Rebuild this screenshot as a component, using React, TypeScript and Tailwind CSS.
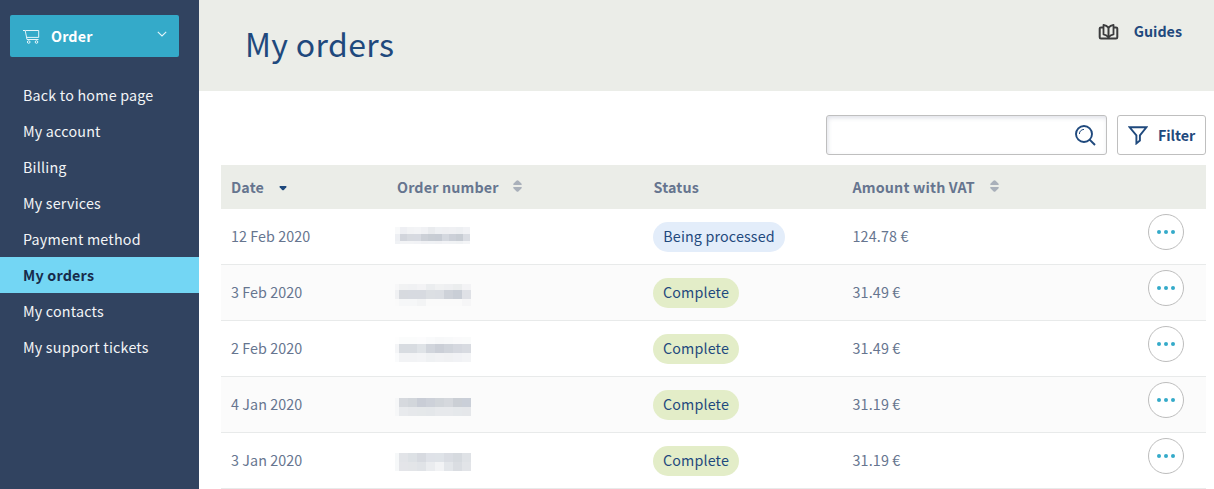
const menu = [
  "Back to home page",
  "My account",
  "Billing",
  "My services",
  "Payment method",
  "My orders",
  "My contacts",
  "My support tickets",
];

type Band = { height: number; colors: string[] };
type Mask = { top: number; edge: number; cell: number; bands: Band[] };
type Order = { date: string; status: string; amount: string; mask: Mask };

const orders: Order[] = [
  {
    date: "12 Feb 2020",
    status: "Being processed",
    amount: "124.78 €",
    mask: {
      top: 18,
      edge: 5,
      cell: 7,
      bands: [
        { height: 7, colors: ["#f8f9fa", "#eeeff3", "#f2f3f5", "#f3f4f6", "#f0f1f4", "#e9ebee", "#eef0f3", "#eeeff2", "#eff0f3", "#edeff2", "#f1f2f5"] },
        { height: 7, colors: ["#edeff3", "#d2d5dc", "#d7dae0", "#d7dae1", "#ccd0d7", "#c8cdd4", "#c7ccd4", "#d4d8df", "#ccd0d8", "#c8cdd4", "#dadde3"] },
        { height: 3, colors: ["#f0f2f5", "#f3f4f6", "#f3f4f6", "#f2f3f6", "#f0f1f4", "#f0f2f5", "#f0f1f4", "#f2f3f6", "#f1f3f5", "#f0f2f4", "#f4f5f7"] },
      ],
    },
  },
  {
    date: "3 Feb 2020",
    status: "Complete",
    amount: "31.49 €",
    mask: {
      top: 19,
      edge: 4,
      cell: 9,
      bands: [
        { height: 6, colors: ["#f7f7f8", "#f1f2f3", "#f0f1f3", "#f3f3f5", "#ebedef", "#f0f1f2", "#eeeff1", "#ebedee", "#f3f3f5"] },
        { height: 9, colors: ["#f0f1f3", "#d7dadf", "#d7dae0", "#d7dae0", "#dcdfe3", "#dbdee3", "#ced2d9", "#c9ced6", "#dfe1e6"] },
        { height: 7, colors: ["#fafafa", "#f6f7f8", "#f6f7f8", "#f3f4f5", "#fafafa", "#fafafa", "#fafafa", "#fafafa", "#f6f6f7"] },
      ],
    },
  },
  {
    date: "2 Feb 2020",
    status: "Complete",
    amount: "31.49 €",
    mask: {
      top: 16,
      edge: 4,
      cell: 9,
      bands: [
        { height: 7, colors: ["#fefefe", "#fbfcfc", "#fbfcfc", "#fcfcfd", "#f9fafb", "#f7f8f9", "#f8f9fa", "#fafafb", "#fafbfb"] },
        { height: 9, colors: ["#f4f5f7", "#d8dce1", "#d8dce1", "#dfe3e7", "#d1d5dc", "#cbcfd7", "#d0d4db", "#d5d8df", "#d8dbe1"] },
        { height: 9, colors: ["#fafbfc", "#f2f3f5", "#f2f3f5", "#f3f4f6", "#eff1f3", "#f1f2f4", "#f0f1f3", "#f1f2f5", "#f3f4f6"] },
      ],
    },
  },
  {
    date: "4 Jan 2020",
    status: "Complete",
    amount: "31.19 €",
    mask: {
      top: 21,
      edge: 4,
      cell: 9,
      bands: [
        { height: 9, colors: ["#f6f7f8", "#d6d9de", "#d2d6db", "#c9cdd6", "#cdd1d9", "#d1d5da", "#d5d8dd", "#cbcfd5", "#cacfd8"] },
        { height: 9, colors: ["#f6f7f8", "#e8eaed", "#e6e8eb", "#e5e8ea", "#e4e7ea", "#e7e9ec", "#e7e9ec", "#e5e8eb", "#e5e7ea"] },
      ],
    },
  },
  {
    date: "3 Jan 2020",
    status: "Complete",
    amount: "31.19 €",
    mask: {
      top: 20,
      edge: 4,
      cell: 9,
      bands: [
        { height: 9, colors: ["#f6f8f9", "#e2e4e8", "#dde1e5", "#d7dae0", "#dfe2e8", "#dfe3e8", "#dadde3", "#d6dadf", "#dfe2e6"] },
        { height: 9, colors: ["#f6f8f9", "#e4e5e9", "#e3e5e8", "#e0e3e7", "#eaecef", "#f2f3f5", "#e3e6ea", "#dadde2", "#e2e4e8"] },
      ],
    },
  },
];

function CartIcon() {
  return (
    <svg className="h-[15px] w-[17px] shrink-0" viewBox="0 0 17 15" fill="none" stroke="#e4f5fa" strokeWidth="1">
      <path d="M0 1.5h2.2L4 10.5h11.5" />
      <path d="M2.5 1.5h13.2v6.9H3.6" />
      <circle cx="5.7" cy="13" r="1.3" />
      <circle cx="13.5" cy="13" r="1.3" />
    </svg>
  );
}

function GuidesIcon() {
  return (
    <svg className="h-[17px] w-[21px] shrink-0" viewBox="0 0 21 17" fill="none" stroke="#3b3c3d" strokeWidth="2" strokeLinejoin="round">
      <path d="M5 4.4H3Q1.7 4.4 1.7 5.6V14.2Q1.7 15.4 3 15.4H18Q19.3 15.4 19.3 14.2V5.6Q19.3 4.4 18 4.4H16" />
      <path d="M10.5 4.6Q8.6 2.4 5.5 1.8V11.4Q9 12 10.5 14.4Q12 12 15.5 11.4V1.8Q12.4 2.4 10.5 4.6Z" strokeWidth="1.8" />
      <path d="M10.5 4.4V14.5" />
    </svg>
  );
}

function SearchIcon() {
  return (
    <svg className="h-[21px] w-[21px]" viewBox="0 0 21 21" fill="none" stroke="#1f497d">
      <circle cx="9" cy="9" r="8" strokeWidth="1.9" />
      <path d="M14.6 14.6L20 20" strokeWidth="2" />
      <path d="M4.4 9Q4.6 4.8 9 4.4" strokeWidth="1" />
    </svg>
  );
}

function FilterIcon() {
  return (
    <svg className="h-[19px] w-5 shrink-0" viewBox="0 0 20 19" fill="none" stroke="#1f497d" strokeWidth="1.9">
      <path d="M1.6 1.3H18.4L11.9 9.4V14.6L8.4 17.4V9.4Z" />
    </svg>
  );
}

function SortIcon() {
  return (
    <svg className="-mt-[2px] h-3 w-[9px] shrink-0" viewBox="0 0 9 12" fill="#a9b0ba">
      <path d="M.6 5Q-.2 4.4.6 3.6L3.4.7Q4.5-.3 5.6.7L8.4 3.6Q9.2 4.4 8.4 5Z" />
      <path d="M.6 7Q-.2 7.6.6 8.4L3.4 11.3Q4.5 12.3 5.6 11.3L8.4 8.4Q9.2 7.6 8.4 7Z" />
    </svg>
  );
}

function MaskedNumber({ mask }: { mask: Mask }) {
  return (
    <div className="-ml-[2px] flex w-fit flex-col" style={{ marginTop: mask.top }}>
      {mask.bands.map((band, i) => (
        <div key={i} className="flex" style={{ height: band.height }}>
          {band.colors.map((color, j) => (
            <div key={j} style={{ width: j === 0 ? mask.edge : mask.cell, backgroundColor: color }} />
          ))}
        </div>
      ))}
    </div>
  );
}

const columns = "grid grid-cols-[166px_256px_199px_1fr_58px] pl-[10px]";

export default function App() {
  return (
    <div className="flex h-[489px] w-[1214px] overflow-hidden bg-white font-['Noto_Sans_CJK_SC','Noto_Sans',sans-serif] text-[14.3px] leading-5 tracking-[0.15px]">
      <aside className="w-[199px] shrink-0 bg-[#314360] pt-[15px] text-white">
        <button className="ml-[10px] flex h-[42px] w-[169px] items-center rounded-[2px] bg-[#34aac9] pl-[13px] pr-3">
          <CartIcon />
          <span className="ml-[11px] font-bold">Order</span>
          <svg className="mb-[5px] ml-auto h-[6px] w-[10px]" viewBox="0 0 10 6" fill="none" stroke="#e4f5fa" strokeWidth="1.1">
            <path d="M.8.8L5 5L9.2.8" />
          </svg>
        </button>
        <nav className="mt-5 tracking-[0.2px]">
          {menu.map((item) => (
            <a
              key={item}
              className={
                item === "My orders"
                  ? "flex h-9 items-center bg-[#73d6f4] pl-[23px] font-bold text-[#172b4a]"
                  : "flex h-9 items-center pl-[23px] text-[#f3f5f7]"
              }
            >
              {item}
            </a>
          ))}
        </nav>
      </aside>
      <main className="min-w-0 flex-1">
        <header className="flex h-[91px] items-start justify-between bg-[#ebede8] pl-[46px] pr-8 text-[#1f497d]">
          <h1 className="pt-[19px] text-[32px] leading-[48px] tracking-[0.35px]">My orders</h1>
          <div className="flex items-center gap-[15px] pt-[21px] font-bold tracking-normal">
            <GuidesIcon />
            <span>Guides</span>
          </div>
        </header>
        <div className="flex justify-end gap-[10px] pr-2 pt-6">
          <div className="flex h-10 w-[281px] items-center justify-end rounded-[3px] border border-[#bfbfbf] pr-[10px] shadow-[inset_1px_2px_4px_rgba(80,90,130,0.18)]">
            <SearchIcon />
          </div>
          <button className="flex h-10 w-[89px] items-center gap-[10px] rounded-[3px] border border-[#bfbfbf] pl-[10px] font-bold tracking-[-0.05px] text-[#1f497d]">
            <FilterIcon />
            <span>Filter</span>
          </button>
        </div>
        <section className="ml-[22px] mr-2 mt-[10px] text-[#66758f]">
          <div className={`${columns} h-11 items-center bg-[#ebede8] font-bold`}>
            <div className="flex items-center">
              Date
              <svg className="ml-[15px] mt-[3px] h-[5px] w-2" viewBox="0 0 8 5" fill="#1f497d">
                <path d="M1 0H7Q8 .5 7.3 1.3L4.9 3.9Q4 4.8 3.1 3.9L.7 1.3Q0 .5 1 0Z" />
              </svg>
            </div>
            <div className="flex items-center gap-[14px]">
              Order number
              <SortIcon />
            </div>
            <div className="pl-[0.5px]">Status</div>
            <div className="flex items-center gap-[15px] pl-[0.5px]">
              Amount with VAT
              <SortIcon />
            </div>
          </div>
          {orders.map((order) => (
            <div key={order.date} className={`${columns} h-14 items-start border-b border-[#e8eaea] odd:bg-[#fbfbfb] even:bg-white`}>
              <div className="pt-[17px] tracking-[0.08px]">{order.date}</div>
              <MaskedNumber mask={order.mask} />
              <div className="pt-[13px]">
                <span
                  className={
                    order.status === "Complete"
                      ? "flex h-[30px] w-[86px] items-center justify-center rounded-full bg-[#e3edc8] pb-[2px] text-[#1f497d]"
                      : "flex h-[30px] w-[132px] items-center justify-center rounded-full bg-[#e3edfa] pb-[2px] text-[#1f497d]"
                  }
                >
                  {order.status}
                </span>
              </div>
              <div className="pl-[0.5px] pt-[17px]">{order.amount}</div>
              <button className="mt-[5px] flex h-9 w-9 items-center justify-center gap-[2.6px] rounded-full border border-[#bdbdbd] bg-white">
                <span className="h-1 w-1 rounded-full bg-[#34aac9]" />
                <span className="h-1 w-1 rounded-full bg-[#34aac9]" />
                <span className="h-1 w-1 rounded-full bg-[#34aac9]" />
              </button>
            </div>
          ))}
        </section>
      </main>
    </div>
  );
}
